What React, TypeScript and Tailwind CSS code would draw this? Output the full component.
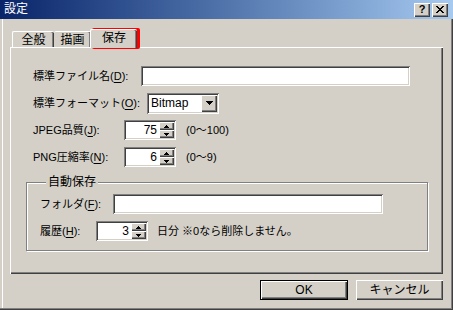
import React from "react";

const sunken =
  "shadow-[inset_1px_1px_#808080,inset_-1px_-1px_#ffffff,inset_2px_2px_#404040,inset_-2px_-2px_#d4d0c8]";
const raised =
  "shadow-[inset_1px_1px_#ffffff,inset_-1px_-1px_#404040,inset_-2px_-2px_#808080]";

const U = ({ c }: { c: string }) => (
  <span className="underline underline-offset-[2px] decoration-1">{c}</span>
);

// label text like 標準ファイル名(D):
const Label = ({ pre, k, w }: { pre: string; k: string; w: string }) => (
  <span className={`${w} shrink-0 whitespace-nowrap`}>
    {pre}(<U c={k} />):
  </span>
);

const Arrow = ({ up }: { up?: boolean }) => (
  <svg width="5" height="3" viewBox="0 0 5 3" className="block">
    <path d={up ? "M2 0h1v1h1v1h1v1H0V2h1V1h1z" : "M0 0h5v1H4v1H3v1H2V2H1V1H0z"} fill="#000" />
  </svg>
);

const Spin = ({ value }: { value: string }) => (
  <div className={`flex h-[20px] w-[52px] shrink-0 bg-white p-[2px] ${sunken}`}>
    <div className="flex-1 pr-[2px] text-right text-[12px] leading-[16px]">{value}</div>
    <div className="flex w-[15px] flex-col">
      <div className={`flex h-[8px] items-center justify-center bg-[#d4d0c8] ${raised}`}>
        <Arrow up />
      </div>
      <div className={`flex h-[8px] items-center justify-center bg-[#d4d0c8] ${raised}`}>
        <Arrow />
      </div>
    </div>
  </div>
);

const TextBox = ({ w }: { w: string }) => (
  <div className={`h-[20px] shrink-0 bg-white ${w} ${sunken}`} />
);

const CloseGlyph = () => (
  <svg width="8" height="7" viewBox="0 0 8 7" className="block">
    <path
      d="M0 0h2v1H0zM6 0h2v1H6zM1 1h2v1H1zM5 1h2v1H5zM2 2h4v1H2zM3 3h2v1H3zM2 4h4v1H2zM1 5h2v1H1zM5 5h2v1H5zM0 6h2v1H0zM6 6h2v1H6z"
      fill="#000"
    />
  </svg>
);

export default function App() {
  return (
    <div className="relative flex h-[310px] w-[453px] flex-col bg-[#d4d0c8] text-[11px] text-black font-['Liberation_Sans','Noto_Sans_CJK_JP',sans-serif] shadow-[inset_-1px_-1px_#404040,inset_-2px_-2px_#808080,inset_2px_0_#d4d0c8,inset_3px_0_#ffffff]">
      {/* title bar */}
      <div className="flex h-[19px] shrink-0 items-center bg-linear-to-r from-[#0a246a] to-[#a6caf0] pl-[4px] pr-[5px]">
        <span className="flex-1 text-[12px] leading-[19px] text-white">設定</span>
        <div className={`flex h-[14px] w-[16px] items-center justify-center bg-[#d4d0c8] ${raised}`}>
          <span className="text-[11px] font-bold leading-none">?</span>
        </div>
        <div className={`ml-[2px] flex h-[14px] w-[16px] items-center justify-center bg-[#d4d0c8] ${raised}`}>
          <CloseGlyph />
        </div>
      </div>

      <div className="flex flex-1 flex-col px-[10px] pt-[10px]">
        {/* tabs */}
        <div className="flex h-[18px] items-end pl-[2px] text-[12px]">
          <div className="flex h-[16px] w-[42px] items-center justify-center rounded-t-[2px] border-l border-t border-white shadow-[inset_-1px_0_#404040,inset_-2px_0_#808080]">
            全般
          </div>
          <div className="flex h-[16px] w-[37px] items-center justify-center rounded-t-[2px] border-t border-white shadow-[inset_-1px_0_#404040,inset_-2px_0_#808080]">
            描画
          </div>
          <div className="relative z-10 -mb-px ml-[-1px] flex h-[19px] w-[47px] items-center justify-center rounded-t-[2px] border-l border-t border-white bg-[#d4d0c8] pb-[2px] shadow-[inset_-1px_0_#404040,inset_-2px_0_#808080]">
            保存
          </div>
        </div>

        {/* panel */}
        <div className="flex h-[227px] flex-col border-l border-t border-white px-[15px] pt-[18px] shadow-[inset_-1px_-1px_#404040,inset_-2px_-2px_#808080]">
          <div className="flex flex-col gap-[7px] pl-[7px]">
            <div className="flex h-[20px] items-center">
              <Label pre="標準ファイル名" k="D" w="w-[108px]" />
              <TextBox w="w-[269px]" />
            </div>
            <div className="flex h-[20px] items-center">
              <Label pre="標準フォーマット" k="O" w="w-[114px]" />
              <div className={`flex h-[21px] w-[72px] bg-white p-[2px] ${sunken}`}>
                <span className="flex-1 pl-[2px] text-[12px] leading-[17px]">Bitmap</span>
                <div className={`flex w-[16px] items-center justify-center bg-[#d4d0c8] ${raised}`}>
                  <svg width="7" height="4" viewBox="0 0 7 4" className="block">
                    <path d="M0 0h7v1H6v1H5v1H4v1H3V3H2V2H1V1H0z" fill="#000" />
                  </svg>
                </div>
              </div>
            </div>
            <div className="flex h-[20px] items-center">
              <Label pre="JPEG品質" k="J" w="w-[91px]" />
              <Spin value="75" />
              <span className="ml-[10px]">(0〜100)</span>
            </div>
            <div className="flex h-[20px] items-center">
              <Label pre="PNG圧縮率" k="N" w="w-[91px]" />
              <Spin value="6" />
              <span className="ml-[10px]">(0〜9)</span>
            </div>
          </div>

          {/* auto save group */}
          <fieldset className="mt-[8px] border border-[#808080] px-[13px] pb-[9px] shadow-[inset_1px_1px_#ffffff,1px_1px_#ffffff]">
            <legend className="ml-[6px] bg-[#d4d0c8] px-[2px] text-[12px] leading-[14px]">自動保存</legend>
            <div className="mt-[5px] flex flex-col gap-[7px]">
              <div className="flex h-[20px] items-center">
                <Label pre="フォルダ" k="F" w="w-[73px]" />
                <TextBox w="w-[270px]" />
              </div>
              <div className="flex h-[20px] items-center">
                <Label pre="履歴" k="H" w="w-[56px]" />
                <Spin value="3" />
                <span className="ml-[9px]">日分 ※0なら削除しません。</span>
              </div>
            </div>
          </fieldset>
        </div>

        {/* buttons */}
        <div className="mt-[6px] flex justify-end gap-[8px] text-[12px]">
          <div className="flex h-[20px] w-[88px] items-center justify-center border border-black bg-[#d4d0c8] shadow-[inset_1px_1px_#ffffff,inset_-1px_-1px_#404040,inset_-2px_-2px_#808080]">
            OK
          </div>
          <div className={`flex h-[20px] w-[87px] items-center justify-center bg-[#d4d0c8] ${raised}`}>
            キャンセル
          </div>
        </div>
      </div>

      {/* red highlight around the active tab */}
      <div className="pointer-events-none absolute left-[92px] top-[28px] h-[21px] w-[48px] rounded-[2px] border-[3px] border-[#ff0000]" />
    </div>
  );
}
